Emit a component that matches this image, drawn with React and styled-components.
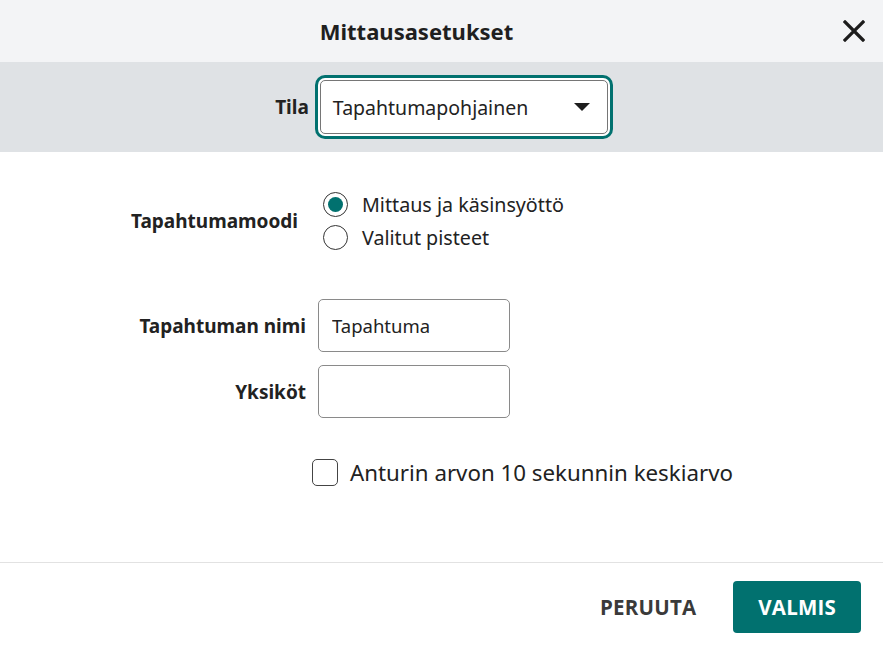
import React, { useState } from 'react'
import styled, { createGlobalStyle } from 'styled-components'

const GlobalStyle = createGlobalStyle`
  html, body {
    margin: 0;
    padding: 0;
    background: #ffffff;
  }
  body {
    font-family: "Noto Sans", "Open Sans", "Liberation Sans", sans-serif;
    color: #222222;
  }
  * { box-sizing: border-box; }
`

const teal = '#01716f'

const Dialog = styled.div`
  width: 883px;
  height: 650px;
  display: flex;
  flex-direction: column;
  background: #fff;
`

const Header = styled.header`
  height: 62px;
  background: #f3f4f6;
  display: flex;
  align-items: center;
`

const Title = styled.h1`
  flex: 1;
  margin: 0;
  text-align: center;
  font-size: 22px;
  font-weight: 700;
  color: #1f1f1f;
`

const CloseButton = styled.button`
  width: 26px;
  height: 26px;
  margin: 0 16px 0 8px;
  padding: 0;
  border: none;
  background: transparent;
  cursor: pointer;
  display: flex;
  align-items: center;
  justify-content: center;
`

const ModeBand = styled.div`
  height: 90px;
  background: #dfe2e5;
  display: flex;
  align-items: center;
  justify-content: center;
  gap: 11px;
`

const Label = styled.label`
  font-weight: 700;
  font-size: 19px;
  color: #222;
  text-align: right;
  padding-right: ${p => p.$pad || 0}px;
`

const SelectBox = styled.div`
  width: 288px;
  height: 54px;
  background: #fff;
  border: 1px solid #767676;
  border-radius: 5px;
  box-shadow: 0 0 0 2px #fff, 0 0 0 5px ${teal};
  display: flex;
  align-items: center;
  justify-content: space-between;
  padding: 0 17px 0 12px;
  font-size: 19.5px;
  color: #222;
`

const Caret = styled.span`
  width: 0;
  height: 0;
  border-left: 8px solid transparent;
  border-right: 8px solid transparent;
  border-top: 8px solid #1e1e1e;
`

const Body = styled.main`
  flex: 1;
  padding-top: 40px;
  display: grid;
  grid-template-columns: 306px 1fr;
  grid-auto-rows: min-content;
  column-gap: 12px;
  align-items: center;
`

const RadioGroup = styled.div`
  display: flex;
  flex-direction: column;
  gap: 8px;
  padding-left: 5px;
`

const Option = styled.label`
  display: flex;
  align-items: center;
  gap: 14px;
  font-size: 19.7px;
  color: #222;
  height: 25px;
`

const RadioCircle = styled.span`
  width: 25px;
  height: 25px;
  border-radius: 50%;
  border: 1.5px solid #333;
  display: flex;
  align-items: center;
  justify-content: center;
  &::after {
    content: '';
    width: 15px;
    height: 15px;
    border-radius: 50%;
    background: ${p => (p.$checked ? teal : 'transparent')};
  }
`

const Spacer = styled.div`
  grid-column: 1 / -1;
  height: ${p => p.$h}px;
`

const TextInput = styled.input`
  width: 192px;
  height: 53px;
  border: 1px solid #8a8a8a;
  border-radius: 5px;
  padding: 0 13px;
  font-family: inherit;
  font-size: 18.5px;
  color: #222;
  outline: none;
`

const CheckRow = styled.label`
  grid-column: 2;
  margin-left: -6px;
  display: flex;
  align-items: center;
  gap: 12px;
  font-size: 22.3px;
  color: #222;
`

const CheckBox = styled.span`
  width: 26px;
  height: 27px;
  border: 1.5px solid #444;
  border-radius: 5px;
  background: #fff;
`

const Footer = styled.footer`
  height: 88px;
  border-top: 1px solid #e2e2e2;
  display: flex;
  align-items: center;
  justify-content: flex-end;
  gap: 21px;
  padding: 0 22px 0 0;
`

const Button = styled.button`
  height: 52px;
  padding: 0 ${p => (p.$primary ? 25 : 16)}px;
  border: none;
  border-radius: 4px;
  background: ${p => (p.$primary ? teal : 'transparent')};
  color: ${p => (p.$primary ? '#fff' : '#3a3a3a')};
  font-family: "Open Sans", "Noto Sans", sans-serif;
  font-weight: 700;
  font-size: 20.5px;
  letter-spacing: 0.2px;
  cursor: pointer;
`

export default function App() {
  const [mode, setMode] = useState('manual')
  const [name, setName] = useState('Tapahtuma')
  const [units, setUnits] = useState('')

  return (
    <Dialog>
      <GlobalStyle />
      <Header>
        <Title>Mittausasetukset</Title>
        <CloseButton aria-label="Sulje">
          <svg width="22" height="22" viewBox="0 0 22 22">
            <path d="M2 2 L20 20 M20 2 L2 20" stroke="#1c1c1c" strokeWidth="3.2" strokeLinecap="square" />
          </svg>
        </CloseButton>
      </Header>

      <ModeBand>
        <Label>Tila</Label>
        <SelectBox>
          <span>Tapahtumapohjainen</span>
          <Caret />
        </SelectBox>
      </ModeBand>

      <Body>
        <Label $pad={8}>Tapahtumamoodi</Label>
        <RadioGroup>
          <Option onClick={() => setMode('manual')}>
            <RadioCircle $checked={mode === 'manual'} />
            Mittaus ja käsinsyöttö
          </Option>
          <Option onClick={() => setMode('points')}>
            <RadioCircle $checked={mode === 'points'} />
            Valitut pisteet
          </Option>
        </RadioGroup>

        <Spacer $h={49} />

        <Label>Tapahtuman nimi</Label>
        <TextInput value={name} onChange={e => setName(e.target.value)} />

        <Spacer $h={13} />

        <Label>Yksiköt</Label>
        <TextInput value={units} onChange={e => setUnits(e.target.value)} />

        <Spacer $h={39} />

        <CheckRow>
          <CheckBox />
          Anturin arvon 10 sekunnin keskiarvo
        </CheckRow>
      </Body>

      <Footer>
        <Button>PERUUTA</Button>
        <Button $primary>VALMIS</Button>
      </Footer>
    </Dialog>
  )
}
